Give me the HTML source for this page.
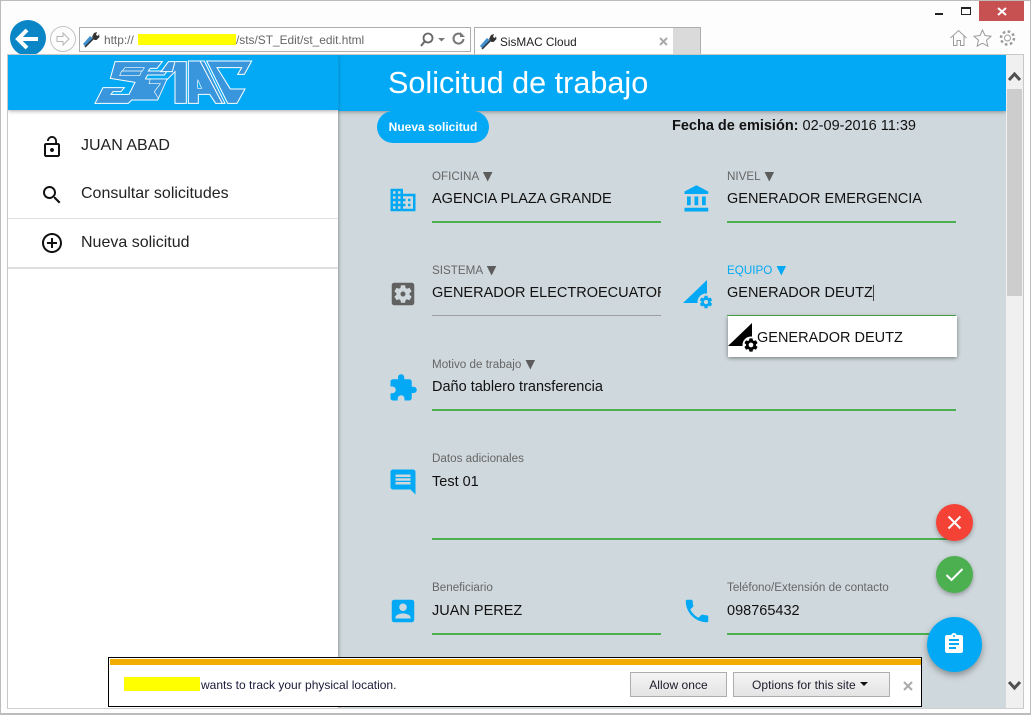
<!DOCTYPE html>
<html><head><meta charset="utf-8"><style>
html,body{margin:0;padding:0;width:1031px;height:715px;overflow:hidden;background:#fdfdfd;font-family:"Liberation Sans",sans-serif}
.a{position:absolute}
.t{position:absolute;white-space:nowrap;line-height:18px}
.l{font-size:11.65px;color:#666;height:18px}
.l span{font-family:"DejaVu Sans",sans-serif;font-size:12.5px;line-height:0;color:#5c5c5c;margin-left:1px}
.v{font-size:14.5px;color:#111}
.ln{position:absolute;height:2px;background:#4caf50}
svg{position:absolute;display:block}
.btn{position:absolute;box-sizing:border-box;border:1px solid #adadad;background:linear-gradient(#f4f4f4,#e4e4e4);font-size:12px;color:#1a1a2a;text-align:center;line-height:25px;letter-spacing:.05px}
</style></head><body>
<div class="a" style="left:0;top:0;width:1029px;height:712px;border:1px solid #bcbcbc;border-width:1px 2px 2px 1px"></div>
<div class="a" style="left:979px;top:1px;width:45px;height:20px;background:#c75050"></div>
<svg style="left:979px;top:1px" width="45" height="20"><path d="M19 7l8 7M27 7l-8 7" stroke="#fff" stroke-width="2"/></svg>
<div class="a" style="left:935px;top:13px;width:8px;height:2px;background:#222"></div>
<div class="a" style="left:961px;top:7px;width:8px;height:5px;border:1px solid #222;border-top-width:2px"></div>

<!-- back / forward -->
<div class="a" style="left:10px;top:20px;width:36px;height:36px;border-radius:50%;background:#0a85c6"></div>
<svg style="left:10px;top:20px" width="36" height="36"><path d="M8 19H28M17 10l-9 9 9 9" fill="none" stroke="#fff" stroke-width="4"/></svg>
<div class="a" style="left:50px;top:26px;width:24px;height:24px;border:1px solid #c4c4c4;border-radius:50%"></div>
<svg style="left:50px;top:26px" width="26" height="26"><path d="M7 10.500h6V7l6 6-6 6v-3.500H7z" fill="none" stroke="#b5b5b5"/></svg>

<!-- address bar -->
<div class="a" style="left:79px;top:27px;width:390px;height:23px;border:1px solid #aeaeae;background:#fff"></div>
<svg style="left:82px;top:31px" width="18" height="18"><path d="M1 13L8 5l4 3-8 8z" fill="#3d8fd0"/><path d="M3 16L13 6" stroke="#333" stroke-width="1.500"/><path d="M10 6l2-4 3-1-1 3 2 1 1-2 .5 3-3 3-2 0z" fill="#333"/></svg>
<div class="t" style="left:104px;top:31px;font-size:11.900px;color:#666">http://</div>
<div class="a" style="left:138px;top:34px;width:98px;height:11px;background:#ff0"></div>
<div class="t" style="left:236px;top:31px;font-size:11.900px;color:#666">/sts/ST_Edit/st_edit.html</div>
<svg style="left:418px;top:31px" width="50" height="16"><circle cx="10" cy="7" r="4.500" fill="none" stroke="#666" stroke-width="1.800"/><path d="M7 10l-4 5" stroke="#666" stroke-width="2"/><path d="M20 7h7l-3.500 3.500z" fill="#777"/><path d="M44 4a5 5 0 1 0 1.500 4" fill="none" stroke="#777" stroke-width="2"/><path d="M42 1v5h5z" fill="#777"/></svg>

<!-- tab -->
<div class="a" style="left:474px;top:27px;width:198px;height:27px;border:1px solid #aeaeae;border-bottom:0;background:#fff"></div>
<div class="a" style="left:673px;top:27px;width:27px;height:27px;border:1px solid #aeaeae;border-width:1px 1px 0 0;background:#dadada"></div>
<svg style="left:479px;top:33px" width="18" height="18"><path d="M1 13L8 5l4 3-8 8z" fill="#3d8fd0"/><path d="M3 16L13 6" stroke="#333" stroke-width="1.500"/><path d="M10 6l2-4 3-1-1 3 2 1 1-2 .5 3-3 3-2 0z" fill="#333"/></svg>
<div class="t" style="left:500px;top:33px;font-size:11.800px;color:#222">SisMAC Cloud</div>
<svg style="left:658px;top:36px" width="12" height="12"><path d="M2 2l7 7M9 2l-7 7" stroke="#aaa" stroke-width="2"/></svg>

<!-- toolbar icons -->
<svg style="left:949px;top:28px" width="70" height="20" fill="none" stroke="#9c9c9c"><path d="M1.500 10L9.500 2.500 17.500 10M4.500 8v9.500h3.500v-5h3.500v5h3.500V8"/><path d="M33.500 2l2.500 5.500 6 .7-4.500 4 1.300 6-5.300-3-5.300 3 1.300-6-4.500-4 6-.7z"/><circle cx="58.500" cy="10" r="3"/><circle cx="58.500" cy="10" r="6.500" stroke-width="2.500" stroke-dasharray="2.600 2.500"/></svg>

<!-- page -->
<div class="a" style="left:8px;top:55px;width:998px;height:653px;background:#cfd8dc;overflow:hidden">
 <div class="a" style="left:0;top:0;width:330px;height:653px;background:#fff;box-shadow:1px 0 3px rgba(0,0,0,.3)"></div>
 <div class="a" style="left:0;top:163px;width:330px;height:1px;background:#e2e2e2"></div>
 <div class="a" style="left:0;top:212px;width:330px;height:2px;background:#e0e0e0"></div>
 <div class="a" style="left:331px;top:0;width:667px;height:56px;background:#03a9f5;box-shadow:0 1px 4px rgba(0,0,0,.35)"></div>
 <div class="a" style="left:0;top:0;width:330px;height:55px;background:#03a9f5;box-shadow:0 1px 4px rgba(0,0,0,.35)"></div>
 <div class="a" style="left:330px;top:0;width:1px;height:56px;background:#0a9be0"></div>
</div>

<!-- logo -->
<svg style="left:85px;top:55px" width="180" height="55" viewBox="0 0 540 165" fill="#3a96dc" stroke="#fff" stroke-width="3">
<path d="M90 20H232L216 40H196L190 48 246 48 238 60 188 60 182 70 182 72H246L218 135H140L130 145 30 145 54 98H118L108 110H84L78 118H132L150 82 76 70z"/>
<path d="M120 38H178L172 48H112zM110 48H170L164 62H104z" stroke-width="2"/>
<path d="M196 72H246L220 130 208 110 226 86 192 86z" stroke-width="2"/>
<path d="M250 20L228 50H262L270 20zM246 74L270 50V145H304V20H272"/>
<path d="M310 18H352L412 145H392L374 118H340V145H310z"/>
<path d="M338 74L350 100H338z" fill="#03a9f5" stroke-width="2"/>
<path d="M345 18L412 145H420L358 18z"/>
<path d="M365 18H500L478 58H458L470 38H396L436 102H480L456 145H428z"/>
</svg>

<div class="t" style="left:388px;top:66px;font-size:30.600px;line-height:34px;color:#fff">Solicitud de trabajo</div>

<!-- sidebar -->
<svg style="left:40px;top:135px" width="24" height="24" viewBox="0 0 24 24" fill="#111"><path d="M12 17c1.100 0 2-.9 2-2s-.9-2-2-2-2 .9-2 2 .9 2 2 2zm6-9h-1V6c0-2.760-2.240-5-5-5S7 3.240 7 6h1.900c0-1.710 1.390-3.100 3.100-3.100 1.710 0 3.100 1.390 3.100 3.100v2H6c-1.100 0-2 .9-2 2v10c0 1.100.9 2 2 2h12c1.100 0 2-.9 2-2V10c0-1.100-.9-2-2-2zm0 12H6V10h12v10z"/></svg>
<svg style="left:40px;top:183px" width="24" height="24" viewBox="0 0 24 24" fill="#111"><path d="M15.500 14h-.79l-.28-.27C15.410 12.590 16 11.110 16 9.500 16 5.910 13.090 3 9.500 3S3 5.910 3 9.500 5.910 16 9.500 16c1.610 0 3.090-.59 4.230-1.570l.27.28v.79l5 4.990L20.490 19l-4.990-5zm-6 0C7.010 14 5 11.990 5 9.500S7.010 5 9.500 5 14 7.010 14 9.500 11.990 14 9.500 14z"/></svg>
<svg style="left:40px;top:231px" width="24" height="24" viewBox="0 0 24 24" fill="#111"><path d="M13 7h-2v4H7v2h4v4h2v-4h4v-2h-4V7zm-1-5C6.480 2 2 6.480 2 12s4.480 10 10 10 10-4.480 10-10S17.520 2 12 2zm0 18c-4.410 0-8-3.590-8-8s3.590-8 8-8 8 3.590 8 8-3.590 8-8 8z"/></svg>
<div class="t" style="left:81px;top:137px;font-size:16px;color:#222">JUAN ABAD</div>
<div class="t" style="left:81px;top:185px;font-size:16px;color:#222">Consultar solicitudes</div>
<div class="t" style="left:81px;top:234px;font-size:16px;color:#222">Nueva solicitud</div>

<!-- form top -->
<div class="a" style="left:377px;top:111px;width:112px;height:32px;border-radius:16px;background:#03a9f5;color:#fff;font-size:12px;font-weight:bold;text-align:center;line-height:32px">Nueva solicitud</div>
<div class="t" style="left:672px;top:117px;font-size:14.500px;color:#111"><b>Fecha de emisión:</b> 02-09-2016 11:39</div>

<!-- icons -->
<svg style="left:388px;top:185px" width="30" height="30" viewBox="0 0 24 24" fill="#03a9f5"><path d="M12 7V3H2v18h20V7H12zM6 19H4v-2h2v2zm0-4H4v-2h2v2zm0-4H4V9h2v2zm0-4H4V5h2v2zm4 12H8v-2h2v2zm0-4H8v-2h2v2zm0-4H8V9h2v2zm0-4H8V5h2v2zm10 12h-8v-2h2v-2h-2v-2h2v-2h-2V9h8v10zm-2-8h-2v2h2v-2zm0 4h-2v2h2v-2z"/></svg>
<svg style="left:682px;top:184px" width="30" height="30" viewBox="0 0 24 24" fill="#03a9f5"><path d="M4 10v7h3v-7H4zm6 0v7h3v-7h-3zM2 22h19v-3H2v3zm14-12v7h3v-7h-3zm-4.500-9L2 6v2h19V6l-9.500-5z"/></svg>
<svg style="left:388px;top:279px" width="30" height="30" viewBox="0 0 24 24" fill="#616161"><path d="M12 10c-1.100 0-2 .9-2 2s.9 2 2 2 2-.9 2-2-.9-2-2-2zm7-7H5c-1.110 0-2 .9-2 2v14c0 1.100.89 2 2 2h14c1.110 0 2-.9 2-2V5c0-1.100-.89-2-2-2zm-1.750 9c0 .23-.02.46-.05.68l1.480 1.160c.13.11.17.3.08.45l-1.400 2.420c-.09.15-.27.21-.43.15l-1.740-.7c-.36.28-.76.51-1.180.69l-.26 1.850c-.03.17-.18.3-.35.3h-2.800c-.17 0-.32-.13-.35-.29l-.26-1.850c-.43-.18-.82-.41-1.180-.69l-1.740.7c-.16.06-.34 0-.43-.15l-1.400-2.420c-.09-.15-.05-.34.08-.45l1.480-1.160c-.03-.23-.05-.46-.05-.69 0-.23.02-.46.05-.68l-1.480-1.160c-.13-.11-.17-.3-.08-.45l1.400-2.420c.09-.15.27-.21.43-.15l1.740.7c.36-.28.76-.51 1.180-.69l.26-1.850c.03-.17.18-.3.35-.3h2.800c.17 0 .32.13.35.29l.26 1.850c.43.18.82.41 1.180.69l1.740-.7c.16-.06.34 0 .43.15l1.400 2.420c.09.15.05.34-.08.45l-1.480 1.160c.03.23.05.46.05.69z"/></svg>
<svg style="left:680px;top:277px" width="36" height="36" viewBox="0 0 36 36"><path d="M3 26L27 3V26z" fill="#03a9f5"/><circle cx="26" cy="25" r="8.500" fill="#cfd8dc"/><svg x="18.500" y="17.500" width="15" height="15" viewBox="0 0 24 24" fill="#03a9f5"><path d="M19.430 12.980c.04-.32.07-.64.07-.98s-.03-.66-.07-.98l2.110-1.650c.19-.15.24-.42.12-.64l-2-3.460c-.12-.22-.39-.3-.61-.22l-2.490 1c-.52-.4-1.080-.73-1.690-.98l-.38-2.650C14.460 2.180 14.250 2 14 2h-4c-.25 0-.46.18-.49.42l-.38 2.650c-.61.25-1.170.59-1.690.98l-2.490-1c-.23-.09-.49 0-.61.22l-2 3.460c-.13.22-.07.49.12.64l2.110 1.650c-.04.32-.07.65-.07.98s.03.66.07.98l-2.110 1.650c-.19.15-.24.42-.12.64l2 3.460c.12.22.39.3.61.22l2.490-1c.52.4 1.080.73 1.690.98l.38 2.650c.03.24.24.42.49.42h4c.25 0 .46-.18.49-.42l.38-2.650c.61-.25 1.170-.59 1.690-.98l2.490 1c.23.09.49 0 .61-.22l2-3.460c.12-.22.07-.49-.12-.64l-2.110-1.650zM12 15.500c-1.930 0-3.500-1.570-3.500-3.500s1.570-3.500 3.500-3.500 3.500 1.570 3.500 3.500-1.570 3.500-3.500 3.500z"/></svg></svg>
<svg style="left:388px;top:373px" width="30" height="30" viewBox="0 0 24 24" fill="#03a9f5"><path d="M20.500 11H19V7c0-1.100-.9-2-2-2h-4V3.500C13 2.120 11.880 1 10.500 1S8 2.120 8 3.500V5H4c-1.100 0-1.990.9-1.990 2v3.800H3.500c1.490 0 2.700 1.210 2.700 2.700s-1.210 2.700-2.700 2.700H2V20c0 1.100.9 2 2 2h3.800v-1.500c0-1.490 1.210-2.700 2.700-2.700 1.490 0 2.700 1.210 2.700 2.700V22H17c1.100 0 2-.9 2-2v-4h1.500c1.380 0 2.500-1.120 2.500-2.500S21.880 11 20.500 11z"/></svg>
<svg style="left:388px;top:467px" width="30" height="30" viewBox="0 0 24 24" fill="#03a9f5"><path transform="matrix(-1 0 0 1 24 0)" d="M20 2H4c-1.100 0-1.990.9-1.990 2L2 22l4-4h14c1.100 0 2-.9 2-2V4c0-1.100-.9-2-2-2zm-2 12H6v-2h12v2zm0-3H6V9h12v2zm0-3H6V6h12v2z"/></svg>
<svg style="left:388px;top:596px" width="30" height="30" viewBox="0 0 24 24" fill="#03a9f5"><path d="M3 5v14c0 1.100.89 2 2 2h14c1.100 0 2-.9 2-2V5c0-1.100-.9-2-2-2H5c-1.110 0-2 .9-2 2zm12 4c0 1.660-1.340 3-3 3s-3-1.340-3-3 1.340-3 3-3 3 1.340 3 3zm-9 8c0-2 4-3.100 6-3.100s6 1.100 6 3.100v1H6v-1z"/></svg>
<svg style="left:682px;top:596px" width="30" height="30" viewBox="0 0 24 24" fill="#03a9f5"><path d="M6.620 10.790c1.440 2.830 3.760 5.140 6.590 6.590l2.200-2.200c.27-.27.67-.36 1.020-.24 1.120.37 2.330.57 3.570.57.55 0 1 .45 1 1V20c0 .55-.45 1-1 1-9.390 0-17-7.610-17-17 0-.55.45-1 1-1h3.500c.55 0 1 .45 1 1 0 1.250.2 2.450.57 3.570.11.35.03.74-.25 1.020l-2.200 2.200z"/></svg>

<!-- fields -->
<div class="t l" style="left:432px;top:168px">OFICINA <span>▼</span></div>
<div class="t v" style="left:432px;top:190px">AGENCIA PLAZA GRANDE</div>
<div class="ln" style="left:432px;top:221px;width:229px"></div>
<div class="t l" style="left:727px;top:168px">NIVEL <span>▼</span></div>
<div class="t v" style="left:727px;top:190px">GENERADOR EMERGENCIA</div>
<div class="ln" style="left:727px;top:221px;width:229px"></div>

<div class="t l" style="left:432px;top:262px">SISTEMA <span>▼</span></div>
<div class="t v" style="left:432px;top:284px;width:229px;overflow:hidden">GENERADOR ELECTROECUATORIANA</div>
<div class="ln" style="left:432px;top:315px;width:229px;height:1px;background:#9e9e9e"></div>
<div class="t l" style="left:727px;top:262px;color:#03a9f5">EQUIPO <span style="color:#03a9f5">▼</span></div>
<div class="t v" style="left:727px;top:284px">GENERADOR DEUTZ</div>
<div class="a" style="left:873px;top:285px;width:1px;height:16px;background:#444"></div>
<div class="ln" style="left:727px;top:315px;width:229px;height:1px"></div>

<div class="a" style="left:728px;top:316px;width:229px;height:41px;background:#fff;box-shadow:0 1px 4px rgba(0,0,0,.45)"></div>
<svg style="left:726px;top:320px" width="36" height="36" viewBox="0 0 36 36"><path d="M2 26L26 3V26z" fill="#000"/><circle cx="25" cy="25" r="8.500" fill="#fff"/><svg x="17" y="17" width="16" height="16" viewBox="0 0 24 24" fill="#000"><path d="M19.430 12.980c.04-.32.07-.64.07-.98s-.03-.66-.07-.98l2.110-1.650c.19-.15.24-.42.12-.64l-2-3.460c-.12-.22-.39-.3-.61-.22l-2.490 1c-.52-.4-1.080-.73-1.690-.98l-.38-2.650C14.460 2.180 14.250 2 14 2h-4c-.25 0-.46.18-.49.42l-.38 2.650c-.61.25-1.170.59-1.690.98l-2.490-1c-.23-.09-.49 0-.61.22l-2 3.460c-.13.22-.07.49.12.64l2.110 1.650c-.04.32-.07.65-.07.98s.03.66.07.98l-2.110 1.650c-.19.15-.24.42-.12.64l2 3.460c.12.22.39.3.61.22l2.490-1c.52.4 1.080.73 1.690.98l.38 2.650c.03.24.24.42.49.42h4c.25 0 .46-.18.49-.42l.38-2.650c.61-.25 1.170-.59 1.690-.98l2.490 1c.23.09.49 0 .61-.22l2-3.460c.12-.22.07-.49-.12-.64l-2.110-1.650zM12 15.500c-1.930 0-3.500-1.570-3.500-3.500s1.570-3.500 3.500-3.500 3.500 1.570 3.500 3.500-1.570 3.500-3.500 3.500z"/></svg></svg>
<div class="t v" style="left:757px;top:329px">GENERADOR DEUTZ</div>

<div class="t l" style="left:432px;top:356px">Motivo de trabajo <span>▼</span></div>
<div class="t v" style="left:432px;top:378px">Daño tablero transferencia</div>
<div class="ln" style="left:432px;top:409px;width:524px"></div>

<div class="t l" style="left:432px;top:450px">Datos adicionales</div>
<div class="t v" style="left:432px;top:473px">Test 01</div>
<div class="ln" style="left:432px;top:538px;width:524px"></div>

<div class="t l" style="left:432px;top:579px">Beneficiario</div>
<div class="t v" style="left:432px;top:602px">JUAN PEREZ</div>
<div class="ln" style="left:432px;top:633px;width:229px"></div>
<div class="t l" style="left:727px;top:579px">Teléfono/Extensión de contacto</div>
<div class="t v" style="left:727px;top:602px">098765432</div>
<div class="ln" style="left:727px;top:633px;width:229px"></div>

<!-- scrollbar -->
<div class="a" style="left:1006px;top:55px;width:17px;height:653px;background:#f0f0f0"></div>
<div class="a" style="left:1007px;top:89px;width:15px;height:207px;background:#cdcdcd"></div>
<svg style="left:1006px;top:70px" width="17" height="12"><path d="M3 10l5.500-6 5.500 6" fill="none" stroke="#505050" stroke-width="3"/></svg>
<svg style="left:1006px;top:680px" width="17" height="12"><path d="M3 2l5.500 6 5.500-6" fill="none" stroke="#505050" stroke-width="3"/></svg>
<div class="a" style="left:1023px;top:54px;width:1px;height:655px;background:#c8c8c8"></div>
<div class="a" style="left:7px;top:54px;width:1px;height:655px;background:#c8c8c8"></div>
<div class="a" style="left:7px;top:54px;width:1017px;height:1px;background:#c8c8c8"></div>
<div class="a" style="left:7px;top:708px;width:1017px;height:1px;background:#d0d0d0"></div>

<!-- FABs -->
<div class="a" style="left:936px;top:504px;width:37px;height:37px;border-radius:50%;background:#f44336;box-shadow:0 2px 5px rgba(0,0,0,.3)"></div>
<svg style="left:936px;top:504px" width="37" height="37"><path d="M12.500 12.500l12 12M24.500 12.500l-12 12" stroke="#fff" stroke-width="2"/></svg>
<div class="a" style="left:936px;top:556px;width:37px;height:37px;border-radius:50%;background:#4caf50;box-shadow:0 2px 5px rgba(0,0,0,.3)"></div>
<svg style="left:936px;top:556px" width="37" height="37"><path d="M10.500 19l5 5 11-11" fill="none" stroke="#fff" stroke-width="2"/></svg>
<div class="a" style="left:927px;top:617px;width:55px;height:55px;border-radius:50%;background:#03a9f5;box-shadow:0 3px 7px rgba(0,0,0,.35)"></div>
<svg style="left:942px;top:632px" width="24" height="24" viewBox="0 0 24 24" fill="#fff"><path d="M19 3h-4.180C14.400 1.840 13.300 1 12 1c-1.300 0-2.400.84-2.820 2H5c-1.100 0-2 .9-2 2v14c0 1.100.9 2 2 2h14c1.100 0 2-.9 2-2V5c0-1.100-.9-2-2-2zm-7 0c.55 0 1 .45 1 1s-.45 1-1 1-1-.45-1-1 .45-1 1-1zm2 14H7v-2h7v2zm3-4H7v-2h10v2zm0-4H7V7h10v2z"/></svg>

<!-- info bar -->
<div class="a" style="left:108px;top:657px;width:812px;height:48px;border:1px solid #000;background:#fff"></div>
<div class="a" style="left:110px;top:659px;width:811px;height:6px;background:#f2ae00"></div>
<div class="a" style="left:124px;top:677px;width:76px;height:14px;background:#ff0"></div>
<div class="t" style="left:201px;top:676px;font-size:12px;color:#1a1a3a">wants to track your physical location.</div>
<div class="btn" style="left:630px;top:672px;width:97px;height:25px">Allow once</div>
<div class="btn" style="left:733px;top:672px;width:157px;height:25px;text-align:left;padding-left:18px">Options for this site</div>
<svg style="left:860px;top:682px" width="10" height="6"><path d="M0 0h8l-4 4z" fill="#111"/></svg>
<svg style="left:903px;top:681px" width="10" height="10"><path d="M1 1l8 8M9 1l-8 8" stroke="#aaa" stroke-width="2"/></svg>
</body></html>
